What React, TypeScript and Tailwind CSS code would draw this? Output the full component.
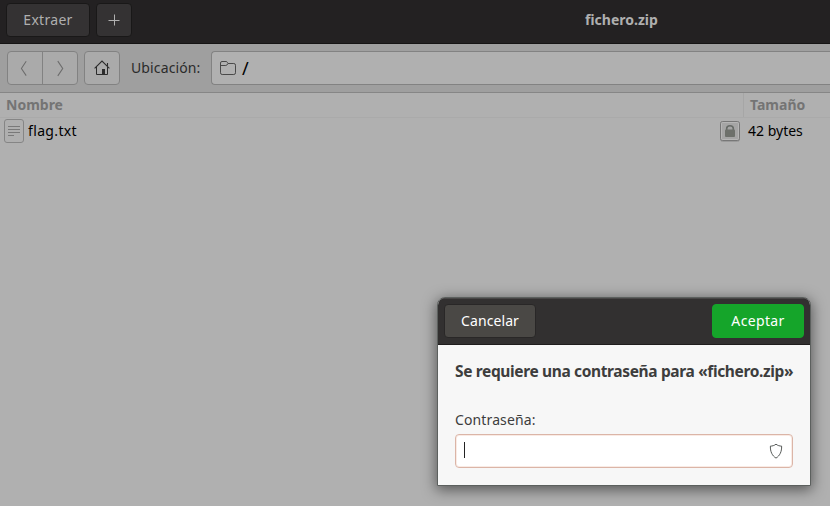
import React from "react";

function NavButton({ points }: { points: string }) {
  return (
    <svg className="h-full w-[35px]" viewBox="0 0 35 32" fill="none" stroke="#6c6c6c" strokeWidth="1.1">
      <polyline points={points} />
    </svg>
  );
}

function HomeIcon() {
  return (
    <svg className="h-4 w-4" viewBox="0 0 16 16" fill="none" stroke="#2c2c2c">
      <path d="M.6 8.4 8 1.1l7.4 7.3M13.5 6V3" strokeWidth="1.1" />
      <path d="M2.5 7v7.5h11V7" />
      <path d="M8 9h3v5.5H8z" fill="#2c2c2c" stroke="none" />
    </svg>
  );
}

function FolderIcon() {
  return (
    <svg className="h-4 w-4" viewBox="0 0 16 16" fill="none" stroke="#494949">
      <path d="M.5 3Q.5 1.500 2 1.500h4q1 0 1.500 1l.5 1h5.800q1.700 0 1.700 1.700v7.600q0 1.700-1.700 1.700H2.200Q.5 14.500.5 12.800z" />
      <path d="M.8 5.500h5Q7 5.500 8 3.500" />
    </svg>
  );
}

function FileIcon() {
  return (
    <svg className="h-6 w-5" viewBox="0 0 20 24" fill="none">
      <rect x=".5" y=".5" width="19" height="23" rx="2.500" fill="#afafaf" stroke="#858585" />
      <path d="M4 7.500h12M4 10.500h12M4 13.500h12M4 16.500h6" stroke="#797979" />
    </svg>
  );
}

function LockIcon() {
  return (
    <svg className="mt-0.5 h-[22px] w-5" viewBox="0 0 20 22" fill="none">
      <rect x=".5" y="1.500" width="19" height="19" rx="2" fill="#a0a0a0" stroke="#9a9a9a" />
      <rect x=".5" y=".5" width="19" height="19" rx="2" fill="#a5a5a5" stroke="#777" />
      <rect x="1.500" y="1.500" width="17" height="17" rx="1" stroke="#b6b6b6" />
      <path d="M6.700 10V7.500Q6.700 4.800 10 4.800t3.300 2.700V10" stroke="#666a66" strokeWidth="1.600" />
      <rect x="5" y="8.500" width="10" height="7.500" rx="1" fill="#6d706b" />
    </svg>
  );
}

function ShieldIcon() {
  return (
    <svg className="h-4 w-4" viewBox="0 0 16 16" fill="none" stroke="#555957">
      <path d="M8 1.200C6.300 2.600 4.200 3.100 2.400 3.100 2.100 8.500 4.300 12.900 8 15.100c3.700-2.200 5.900-6.600 5.600-12C11.800 3.100 9.700 2.600 8 1.200z" />
    </svg>
  );
}

function PasswordDialog() {
  return (
    <section className="absolute left-[437px] top-[297px] flex h-[189px] w-[374px] flex-col overflow-hidden rounded-t-lg border border-[#5c605e] bg-[#f7f7f7] shadow-[0_3px_14px_1px_rgba(0,0,0,0.5)]">
      <header className="flex h-[47px] shrink-0 items-center justify-between border-b border-[#1f1d1d] bg-[#323030] px-1.5 pb-px text-white shadow-[inset_0_1px_0_#484646]">
        <button className="h-[34px] w-[92px] rounded border border-[#292727] bg-[#4a4845] tracking-[0.1px]">Cancelar</button>
        <button className="h-[34px] w-[92px] rounded border border-[#15a52a] bg-[#15a52a] tracking-[0.025em]">Aceptar</button>
      </header>
      <div className="flex flex-col px-[17px] pt-[14px] text-[#3d3d3d]">
        <h2 className="h-6 whitespace-nowrap text-[15.5px] font-bold leading-6 tracking-[-0.36px]">Se requiere una contraseña para «fichero.zip»</h2>
        <label className="mt-[27px] h-5 leading-5 tracking-[0.12px]">Contraseña:</label>
        <div className="mt-1 flex h-[34px] w-[338px] items-center justify-between rounded border border-[#dbb5a7] bg-white pl-2 pr-2 shadow-[inset_0_0_0_1px_#f9ebe5]">
          <span className="mb-0.5 h-4 w-px bg-[#222]" />
          <ShieldIcon />
        </div>
      </div>
    </section>
  );
}

export default function App() {
  return (
    <main className="relative flex h-[506px] w-[830px] flex-col overflow-hidden bg-[#b0b0b0] font-['Noto_Sans',sans-serif] text-[14px] leading-5 text-black">
      <header className="flex h-11 shrink-0 items-center border-b border-[#151414] bg-[#232122] pb-[3px] pl-1.5 text-[#afafaf]">
        <button className="h-[34px] w-[84px] rounded border border-[#191818] bg-[#343233] tracking-[0.3px]">Extraer</button>
        <button className="ml-1.5 flex h-[34px] w-9 items-center justify-center rounded border border-[#191818] bg-[#343233]">
          <svg className="h-3 w-3" viewBox="0 0 12 12" stroke="#b0b0b0">
            <path d="M.5 6.500h11M6.500.5v11" />
          </svg>
        </button>
        <h1 className="ml-[453px] font-bold">fichero.zip</h1>
      </header>
      <nav className="flex h-[49px] shrink-0 items-center border-b border-[#868686] bg-[#9f9f9f] pl-[7px] text-[#2b2b2b]">
        <div className="flex h-[34px] w-[71px] divide-x divide-[#828282] rounded border border-[#828282] bg-[#aaaaaa]">
          <NavButton points="19,9 14,16.5 19,24" />
          <NavButton points="15,9 20,16.5 15,24" />
        </div>
        <button className="ml-1.5 flex h-[34px] w-9 items-center justify-center rounded border border-[#828282] bg-[#aaaaaa]">
          <HomeIcon />
        </button>
        <span className="ml-[11px] w-20 tracking-[0.12px]">Ubicación:</span>
        <div className="flex h-[34px] flex-1 items-center rounded-l border border-r-0 border-[#828282] bg-[#b0b0b0] pl-2 text-black">
          <FolderIcon />
          <span className="ml-1.5 pb-px text-[18px]">/</span>
        </div>
      </nav>
      <div className="flex h-[25px] shrink-0 items-center border-b border-[#aaaaaa] font-bold text-[#747474]">
        <span className="w-[743px] pl-1.5">Nombre</span>
        <span className="flex h-full items-center border-l border-[#a6a6a6] pl-1.5">Tamaño</span>
      </div>
      <div className="flex h-[26px] shrink-0 items-center pl-1">
        <FileIcon />
        <span className="ml-1 w-[692px] tracking-[0.35px]">flag.txt</span>
        <LockIcon />
        <span className="ml-2">42 bytes</span>
      </div>
      <PasswordDialog />
    </main>
  );
}
